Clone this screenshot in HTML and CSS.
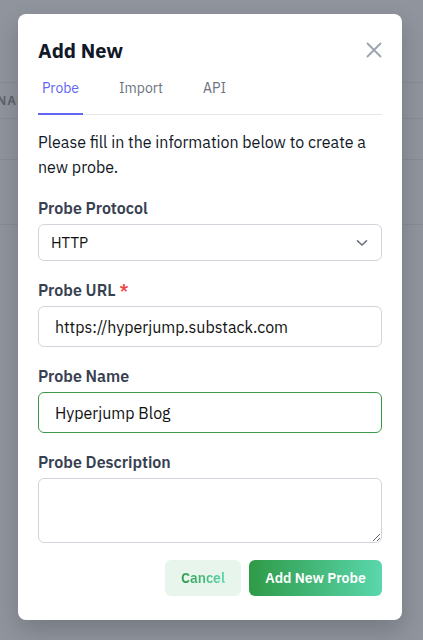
FILE: index.html
```html
<!DOCTYPE html>
<html lang="en">
<head>
  <meta charset="UTF-8" />
  <meta name="viewport" content="width=device-width, initial-scale=1.0"/>
  <title>Add New Probe</title>
  <link rel="stylesheet" href="styles.css">
</head>
<body>

  <!-- Page behind the overlay -->
  <div class="backdrop">
    <div class="bg-top"></div>
    <div class="bg-row bg-head"><span>NAME</span></div>
    <div class="bg-row"></div>
    <div class="bg-row bg-tall"></div>
  </div>

  <!-- Add New modal -->
  <div class="modal">
    <div class="modal-header">
      <h1>Add New</h1>
      <button class="close-btn" title="Close">
        <svg width="16" height="16" viewBox="0 0 16 16" fill="none" stroke="currentColor" stroke-width="1.8" stroke-linecap="round">
          <path d="M1.5 1.5l13 13M14.5 1.5l-13 13"/>
        </svg>
      </button>
    </div>

    <div class="tabs">
      <a class="tab active" href="#">Probe</a>
      <a class="tab" href="#">Import</a>
      <a class="tab" href="#">API</a>
    </div>

    <p class="intro">Please fill in the information below to create a new probe.</p>

    <form class="probe-form">
      <div class="field">
        <label for="protocol">Probe Protocol</label>
        <div class="select-wrap">
          <select id="protocol">
            <option>HTTP</option>
            <option>TCP</option>
          </select>
          <svg class="chevron" width="12" height="8" viewBox="0 0 12 8" fill="none" stroke="currentColor" stroke-width="1.6" stroke-linecap="round" stroke-linejoin="round">
            <path d="M1.5 1.8L6 6l4.5-4.2"/>
          </svg>
        </div>
      </div>

      <div class="field">
        <label for="url">Probe URL <span class="req">*</span></label>
        <input type="text" id="url" value="https://hyperjump.substack.com" />
      </div>

      <div class="field">
        <label for="name">Probe Name</label>
        <input type="text" id="name" class="focused" value="Hyperjump Blog" />
      </div>

      <div class="field">
        <label for="desc">Probe Description</label>
        <textarea id="desc"></textarea>
      </div>

      <div class="actions">
        <button type="button" class="btn-cancel"><span>Cancel</span></button>
        <button type="submit" class="btn-primary">Add New Probe</button>
      </div>
    </form>
  </div>

</body>
</html>
```

FILE: styles.css
```css
:root {
  --overlay: #8f949d;
  --line: #868b94;
  --text: #1f2937;
  --label: #374151;
  --border: #d1d5db;
  --indigo: #6366f1;
  --green: #2f9a47;
  --teal: #5ad7ad;
}

* {
  box-sizing: border-box;
}

body {
  font-family: "IBM Plex Sans", "Noto Sans", sans-serif;
  background-color: var(--overlay);
  color: var(--text);
  margin: 0;
  padding: 0;
  height: 640px;
  overflow: hidden;
  position: relative;
}

/* background page, dimmed */
.backdrop {
  display: flex;
  flex-direction: column;
}

.bg-top {
  height: 83px;
  border-bottom: 1px solid var(--line);
}

.bg-row {
  height: 36px;
  border-bottom: 1px solid var(--line);
}

.bg-head {
  display: flex;
  align-items: center;
}

.bg-head span {
  margin-left: -3px;
  font-size: 13px;
  font-weight: 600;
  letter-spacing: 1px;
  color: #5d626b;
}

.bg-row:nth-child(3) {
  height: 41px;
}

.bg-tall {
  height: 65px;
}

/* modal card */
.modal {
  position: absolute;
  top: 14px;
  left: 18px;
  width: 384px;
  height: 606px;
  background: white;
  border-radius: 8px;
  padding: 22px 20px 20px;
  box-shadow: 0 10px 25px rgba(0, 0, 0, 0.18);
}

.modal-header {
  display: flex;
  justify-content: space-between;
  align-items: center;
  height: 28px;
}

h1 {
  margin: 0;
  font-size: 20px;
  font-weight: 700;
  color: #111827;
}

.close-btn {
  background: none;
  border: none;
  padding: 0;
  color: #9ca3af;
  cursor: pointer;
  display: flex;
}

.tabs {
  display: flex;
  margin-top: 9px;
  border-bottom: 1px solid #e5e7eb;
}

.tab {
  font-size: 14px;
  color: #6b7280;
  text-decoration: none;
  padding: 6px 0 16px;
  margin-right: 36px;
}

.tab:nth-child(2) {
  width: 84px;
  margin-right: 0;
}

.tab.active {
  width: 45px;
  text-align: center;
  color: var(--indigo);
  border-bottom: 2px solid var(--indigo);
  margin-bottom: -1px;
}

.intro {
  margin: 15px 0 0;
  font-size: 16px;
  line-height: 25px;
  color: #111827;
}

.probe-form {
  display: flex;
  flex-direction: column;
  gap: 17px;
  margin-top: 16px;
}

.field {
  display: flex;
  flex-direction: column;
  gap: 4px;
}

label {
  font-size: 16px;
  font-weight: 600;
  line-height: 24px;
  color: var(--label);
}

.req {
  color: #ef4444;
}

.select-wrap {
  position: relative;
}

select,
input,
textarea {
  width: 100%;
  font-family: inherit;
  border: 1px solid var(--border);
  border-radius: 6px;
  background: white;
  color: #111;
  outline: none;
}

select {
  appearance: none;
  height: 37px;
  font-size: 15px;
  padding: 0 12px;
}

.chevron {
  position: absolute;
  right: 14px;
  top: 15px;
  color: #6b7280;
  pointer-events: none;
}

input {
  height: 41px;
  font-size: 16px;
  padding: 0 16px;
}

input.focused {
  border-color: #3a9a4a;
}

textarea {
  height: 65px;
  resize: vertical;
  padding: 8px 12px;
  font-size: 16px;
}

.actions {
  display: flex;
  justify-content: flex-end;
  gap: 8px;
}

.actions button {
  height: 36px;
  border: none;
  border-radius: 6px;
  font-family: inherit;
  font-size: 14px;
  font-weight: 600;
  cursor: pointer;
}

.btn-cancel {
  width: 76px;
  background: #e8f5ec;
}

.btn-cancel span {
  background: linear-gradient(90deg, #2f9a47, #5ad7ad);
  -webkit-background-clip: text;
  background-clip: text;
  color: transparent;
}

.btn-primary {
  width: 133px;
  color: white;
  background: linear-gradient(90deg, var(--green), var(--teal));
}
```
